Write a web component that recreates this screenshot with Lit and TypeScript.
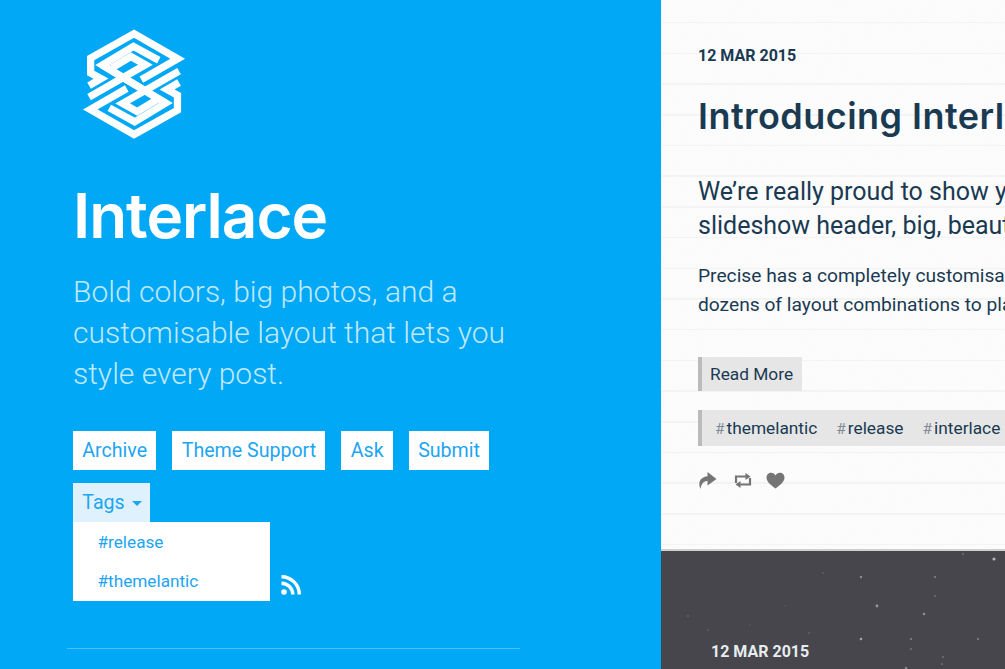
import { css, html, svg, LitElement } from "lit";
import { customElement } from "lit/decorators.js";

// [x, y, radius, opacity], relative to the dark post
const STARS = [
  [333, 8, 1.6, 0.6], [200, 26, 1.2, 0.4], [274, 26, 1, 0.35], [216, 55, 1.4, 0.45],
  [263, 63, 1.3, 0.4], [200, 88, 1.3, 0.5], [250, 88, 1, 0.35], [317, 88, 1, 0.35],
  [250, 98, 1, 0.25], [245, 117, 1.3, 0.35], [282, 106, 0.9, 0.25], [281, 113, 0.9, 0.25],
  [274, 45, 0.9, 0.25], [27, 65, 0.8, 0.25], [47, 79, 0.8, 0.25], [148, 82, 0.8, 0.25],
  [302, 3, 0.9, 0.25], [162, 22, 0.8, 0.2], [89, 74, 0.7, 0.15], [124, 55, 0.7, 0.15],
];

const NAV = ["Archive", "Theme Support", "Ask", "Submit"];
const TAGS = ["themelantic", "release", "interlace"];

@customElement("app-root")
export class AppRoot extends LitElement {
  private renderLogo() {
    // the mark has 180 degree symmetry, so only one half is drawn by hand
    const half = svg`
      <path d="M215 193 L330 127 L192 48 L55 125 V172 L88 190 L50 212" />
      <path d="M270 132 L190 88 L92 147 L292 267" />
      <path d="M122 156 L182 120 L228 146 L50 248" />
    `;
    return html`
      <svg class="logo" viewBox="-10 -11 410 426" width="130" height="135">
        <g fill="none" stroke="#fff" stroke-width="23" stroke-linejoin="miter">
          ${half}
          <g transform="rotate(180 192 207)">${half}</g>
        </g>
      </svg>
    `;
  }

  private renderSidebar() {
    return html`
      <aside class="sidebar">
        ${this.renderLogo()}
        <h1 class="site-title">Interlace</h1>
        <p class="description">
          Bold colors, big photos, and a<br />customisable layout that lets you<br />style every post.
        </p>
        <nav class="nav">
          ${NAV.map((item) => html`<a class="btn">${item}</a>`)}
        </nav>
        <div class="tags-row">
          <div class="dropdown">
            <a class="btn open">Tags<span class="caret"></span></a>
            <div class="menu">
              <a>#release</a>
              <a>#themelantic</a>
            </div>
          </div>
          <svg class="rss" viewBox="0 0 20 20" width="20" height="20">
            <circle cx="3" cy="17" r="2.8" fill="#fff" />
            <path d="M0.5 8.2 A11.3 11.3 0 0 1 11.8 19.5" fill="none" stroke="#fff" stroke-width="3.4" />
            <path d="M0.5 1.7 A17.8 17.8 0 0 1 18.3 19.5" fill="none" stroke="#fff" stroke-width="3.4" />
          </svg>
        </div>
        <hr class="divider" />
      </aside>
    `;
  }

  private renderActions() {
    return html`
      <div class="actions">
        <svg viewBox="0 0 20 20" width="20" height="20">
          <path d="M2.5 19 C0 14 1 7 9.5 6.2 V2 L18.5 9 L9.5 15.5 V11 C6 11 3.5 13 2.5 19 Z" fill="#757575" />
        </svg>
        <svg viewBox="0 0 18 15" width="18" height="15">
          <path d="M2 10 V3.5 H12" fill="none" stroke="#757575" stroke-width="2.2" />
          <path d="M11.5 0 L16.5 3.5 L11.5 7 Z" fill="#757575" />
          <path d="M16 5 V11.5 H6" fill="none" stroke="#757575" stroke-width="2.2" />
          <path d="M6.5 8 L1.5 11.5 L6.5 15 Z" fill="#757575" />
        </svg>
        <svg viewBox="0 0 20 18" width="19" height="17">
          <path d="M10 17.5 C4 13 0.5 10 0.5 5.8 C0.5 2.8 2.8 0.8 5.4 0.8 C7.3 0.8 9 1.8 10 3.6 C11 1.8 12.7 0.8 14.6 0.8 C17.2 0.8 19.5 2.8 19.5 5.8 C19.5 10 16 13 10 17.5 Z" fill="#757575" />
        </svg>
      </div>
    `;
  }

  private renderPosts() {
    return html`
      <main class="posts">
        <article class="post">
          <svg class="grain" width="344" height="548">
            <filter id="grain">
              <feTurbulence type="fractalNoise" baseFrequency="0.9" numOctaves="2" />
              <feColorMatrix values="0 0 0 0 0.5  0 0 0 0 0.5  0 0 0 0 0.5  0.5 0 0 0 -0.18" />
            </filter>
            <rect width="344" height="548" filter="url(#grain)" />
          </svg>
          <div class="date">12 MAR 2015</div>
          <h2 class="post-title">Introducing Interlace</h2>
          <p class="lead">We’re really proud to show you<br />slideshow header, big, beautiful</p>
          <p class="body">Precise has a completely customisable<br />dozens of layout combinations to play</p>
          <a class="read-more">Read More</a>
          <div class="post-tags">
            ${TAGS.map((tag) => html`<span class="tag"><i>#</i>${tag}</span>`)}
          </div>
          ${this.renderActions()}
        </article>
        <article class="post dark">
          <svg class="stars" width="344" height="119">
            ${STARS.map(([x, y, r, o]) => svg`<circle cx=${x} cy=${y} r=${r} fill="#fff" opacity=${o} />`)}
          </svg>
          <div class="date">12 MAR 2015</div>
        </article>
      </main>
    `;
  }

  render() {
    return html`${this.renderSidebar()}${this.renderPosts()}`;
  }

  static styles = css`
    :host {
      display: flex;
      width: 1005px;
      height: 669px;
      overflow: hidden;
      font-family: Roboto, sans-serif;
    }

    .sidebar {
      box-sizing: border-box;
      flex: 0 0 661px;
      height: 669px;
      padding: 0 0 0 73px;
      background: #01a8f5;
      overflow: hidden;
    }

    .logo {
      display: block;
      margin: 15px 0 0 -3px;
    }

    .site-title {
      margin: 22px 0 0;
      font: 600 62px/88px Inter, sans-serif;
      letter-spacing: -1px;
      color: #fff;
    }

    .description {
      margin: 11px 0 0;
      font-size: 30px;
      font-weight: 300;
      line-height: 41px;
      color: rgba(255, 255, 255, 0.75);
    }

    .nav {
      display: flex;
      gap: 16px;
      margin-top: 37px;
    }

    .btn {
      display: block;
      height: 39px;
      padding: 0 9.3px;
      background: #fff;
      color: #1da5f2;
      font-size: 19.6px;
      line-height: 39px;
      white-space: nowrap;
    }

    .tags-row {
      display: flex;
      align-items: flex-end;
      margin-top: 13px;
    }

    .btn.open {
      width: 58.4px;
      background: #dff1fd;
    }

    .caret {
      display: inline-block;
      margin-left: 7px;
      vertical-align: 3px;
      border-top: 5px solid #1da5f2;
      border-left: 5px solid transparent;
      border-right: 5px solid transparent;
    }

    .menu {
      box-sizing: border-box;
      width: 197px;
      height: 79px;
      padding-top: 1px;
      background: #fff;
    }

    .menu a {
      display: block;
      padding-left: 24.5px;
      font-size: 17.2px;
      line-height: 39px;
      color: #1da5f2;
    }

    .rss {
      display: block;
      margin: 0 0 6px 11px;
    }

    .divider {
      width: 453px;
      margin: 47px 0 0 -6px;
      border: 0;
      border-top: 1px solid rgba(255, 255, 255, 0.3);
    }

    .posts {
      flex: 1;
      min-width: 0;
      display: flex;
      flex-direction: column;
      height: 669px;
      overflow: hidden;
    }

    .post {
      position: relative;
      box-sizing: border-box;
      flex: 0 0 551px;
      padding: 47px 0 0 37px;
      white-space: nowrap;
      color: #1a3a52;
      background-color: #fcfcfc;
      background-image: repeating-linear-gradient(
        to bottom,
        transparent 0,
        transparent 22px,
        #f4f4f4 22px,
        #f4f4f4 23.5px,
        transparent 23.5px,
        transparent 30.7px
      );
      border-bottom: 2px solid #cfcfcf;
    }

    .grain {
      position: absolute;
      top: 0;
      left: 0;
      opacity: 0.12;
    }

    .date {
      position: relative;
      font-size: 16px;
      font-weight: 700;
      line-height: 18px;
    }

    .post-title {
      position: relative;
      margin: 29px 0 0;
      font: 600 36px/44px Inter, sans-serif;
      letter-spacing: 0.45px;
    }

    .lead {
      position: relative;
      margin: 37px 0 0;
      font-size: 25px;
      line-height: 34px;
    }

    .body {
      position: relative;
      margin: 18px 0 0;
      font-size: 19.2px;
      line-height: 29px;
    }

    .read-more {
      position: relative;
      display: inline-block;
      box-sizing: border-box;
      height: 34px;
      margin-top: 38px;
      padding: 0 9px 0 8px;
      border-left: 4px solid #bbb;
      background: #e6e6e6;
      font-size: 17.3px;
      line-height: 34px;
    }

    .post-tags {
      position: relative;
      display: flex;
      gap: 19px;
      box-sizing: border-box;
      height: 36px;
      margin-top: 19px;
      padding-left: 13px;
      border-left: 4px solid #bbb;
      background: #e6e6e6;
      font-size: 17.3px;
      line-height: 36px;
    }

    .tag i {
      font-style: normal;
      font-size: 15.5px;
      color: #7f8c96;
      margin-right: 2px;
    }

    .actions {
      position: relative;
      display: flex;
      align-items: center;
      gap: 14px;
      margin-top: 24px;
    }

    .actions svg {
      display: block;
    }

    .actions svg:first-child {
      margin-right: 2px;
    }

    .post.dark {
      flex: 1;
      padding: 92px 0 0 50px;
      background: #46464c;
      border: 0;
      color: #e6ecef;
    }

    .stars {
      position: absolute;
      top: 0;
      left: 0;
    }
  `;
}
